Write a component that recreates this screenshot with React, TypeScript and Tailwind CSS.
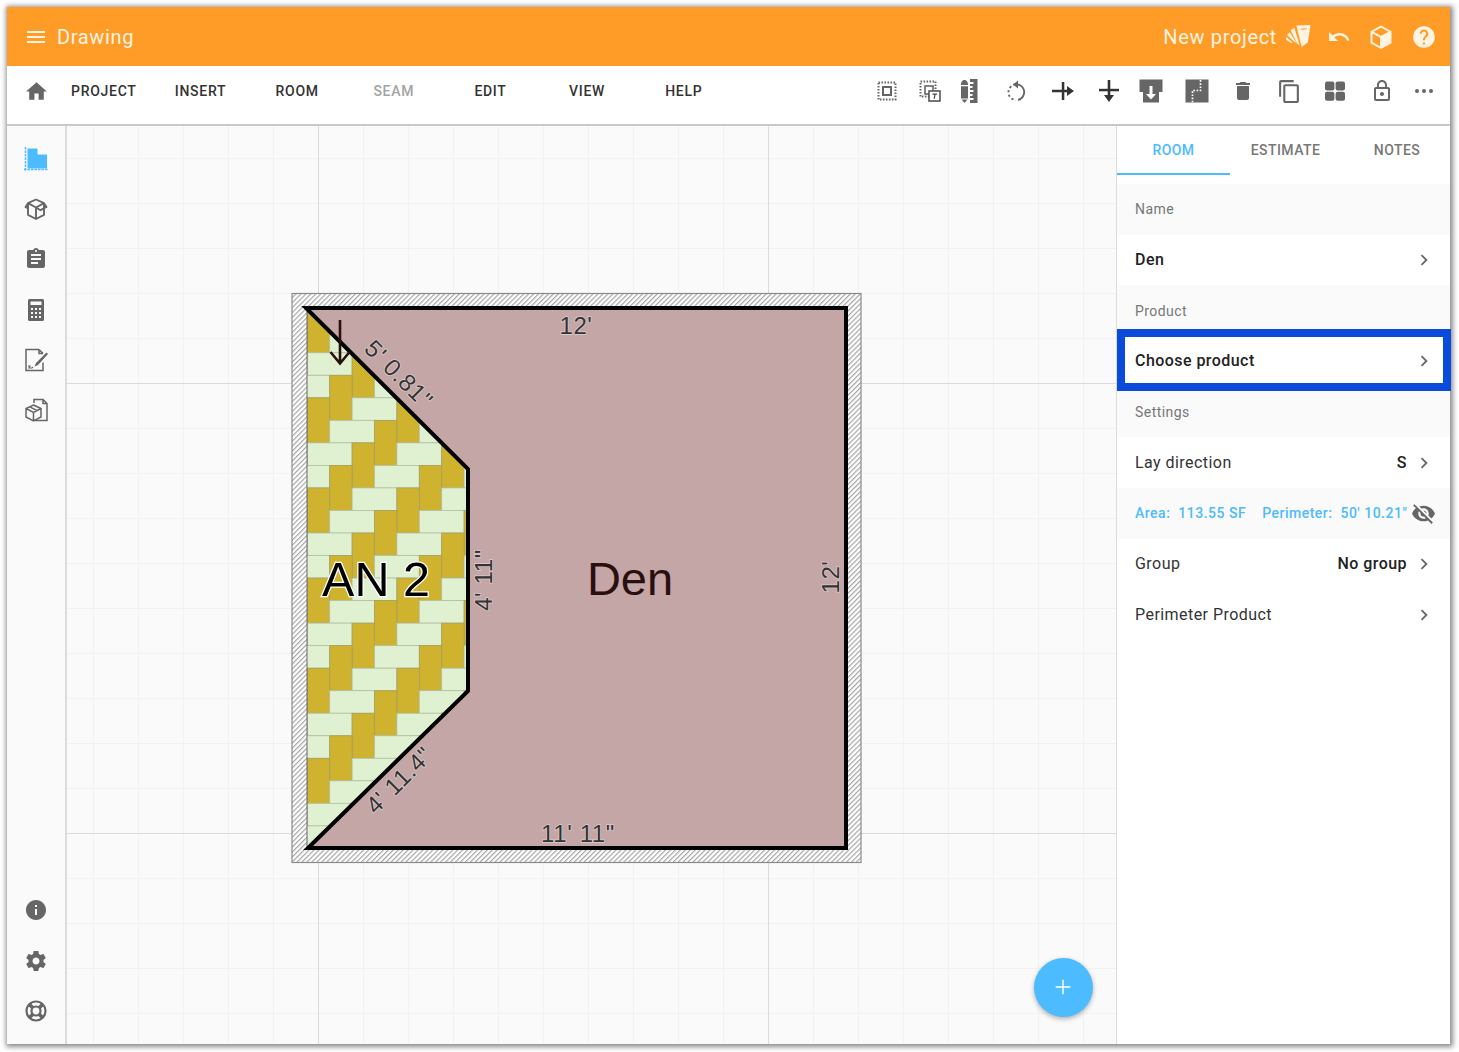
import type { ReactNode } from "react";

const font = "font-['Roboto',sans-serif]";

function Ic({ children, className = "", size = 24, fill = "#666" }: { children: ReactNode; className?: string; size?: number; fill?: string }) {
  return (
    <svg viewBox="0 0 24 24" width={size} height={size} fill={fill} className={`shrink-0 ${className}`}>
      {children}
    </svg>
  );
}

function Chevron({ className = "" }: { className?: string }) {
  return (
    <Ic size={22} className={className}>
      <path d="M10 6L8.59 7.41 13.17 12l-4.58 4.59L10 18l6-6z" />
    </Ic>
  );
}

const DOTTED = { fill: "none", stroke: "#666", strokeWidth: 2, strokeDasharray: "1.6 1.4" };

function ToolIcons() {
  return (
    <div className="ml-auto mr-[14px] flex items-center">
      <Ic>
        <rect x="3.5" y="3.5" width="17" height="17" {...DOTTED} />
        <rect x="8" y="8" width="8" height="8" fill="none" stroke="#666" strokeWidth="2" />
      </Ic>
      <Ic className="ml-[19px]">
        <rect x="2.5" y="2.5" width="15" height="15" {...DOTTED} />
        <rect x="7" y="7" width="8" height="8" fill="none" stroke="#666" strokeWidth="1.6" />
        <rect x="11" y="12" width="11" height="10" fill="#fff" stroke="#555" strokeWidth="1.6" />
        <path d="M14.5 14.5H19v1.2h-1.5l-.6 4h-1.2l.6-4h-1.8z" fill="#444" />
      </Ic>
      <Ic className="ml-[16px]">
        <path d="M3 5.5C3 3.5 4 1 6.5 1S10 3.5 10 5.5V6H3zM3 7.2h7v12.3H3zM3.5 20.5h6L6.500 24z" />
        <path d="M12 0h7.500v24H12zM12 3v2h3.500V3zm0 4v2h2.500V7zm0 4v2h3.500v-2zm0 4v2h2.500v-2zm0 4v2h3.500v-2z" fillRule="evenodd" />
      </Ic>
      <Ic className="ml-[23px]">
        <path d="M11.500 5.200a8 8 0 0 1 1.500 15.800" fill="none" stroke="#666" strokeWidth="1.9" />
        <path d="M10.300 5.300a8 8 0 0 0-6 11.500 8 8 0 0 0 6.700 4.200" fill="none" stroke="#666" strokeWidth="1.9" strokeDasharray="2.2 2.4" />
        <path d="M8 5.500L13 1.500v8z" />
      </Ic>
      <Ic className="ml-[22px]" fill="#333">
        <path d="M1 10.700h15V7l7 5-7 5v-3.700H1z" />
        <rect x="10.800" y="3" width="2.500" height="18" />
      </Ic>
      <Ic className="ml-[22px]" fill="#333">
        <path d="M10.700 1v15H7l5 7 5-7h-3.700V1z" />
        <rect x="2" y="9.800" width="20" height="2.500" />
      </Ic>
      <Ic className="ml-[18px]">
        <rect x="0.5" y="0.5" width="23" height="12.500" />
        <rect x="4" y="13" width="16" height="10.500" />
        <path d="M10.500 7h3v8h3.500L12 20.500 7 15h3.500z" fill="#fff" />
      </Ic>
      <Ic className="ml-[22px]">
        <rect x="0.5" y="0.5" width="23" height="23" />
        <path d="M15.500 1v10.500H7.500V23" stroke="#fff" strokeWidth="1.7" strokeDasharray="1.7 1.5" fill="none" />
      </Ic>
      <Ic className="ml-[22px]">
        <path d="M6 19c0 1.100.9 2 2 2h8c1.100 0 2-.9 2-2V7H6v12zM19 4h-3.500l-1-1h-5l-1 1H5v2h14V4z" />
      </Ic>
      <Ic className="ml-[22px]" size={25}>
        <path d="M16 1H4c-1.100 0-2 .9-2 2v14h2V3h12V1zm3 4H8c-1.100 0-2 .9-2 2v14c0 1.100.9 2 2 2h11c1.100 0 2-.9 2-2V7c0-1.100-.9-2-2-2zm0 16H8V7h11v14z" />
      </Ic>
      <Ic className="ml-[21px]">
        <rect x="2" y="2.500" width="9.400" height="9" rx="2" />
        <rect x="12.600" y="2.500" width="9.400" height="9" rx="2" />
        <rect x="2" y="12.700" width="9.400" height="9" rx="2" />
        <rect x="12.600" y="12.700" width="9.400" height="9" rx="2" />
      </Ic>
      <Ic className="ml-[23px]">
        <path d="M12 17c1.100 0 2-.9 2-2s-.9-2-2-2-2 .9-2 2 .9 2 2 2zm6-9h-1V6c0-2.760-2.240-5-5-5S7 3.240 7 6v2H6c-1.100 0-2 .9-2 2v10c0 1.100.9 2 2 2h12c1.100 0 2-.9 2-2V10c0-1.100-.9-2-2-2zM8.900 6c0-1.710 1.390-3.100 3.100-3.100s3.100 1.390 3.100 3.100v2H8.900V6zM18 20H6V10h12v10z" />
      </Ic>
      <Ic className="ml-[18px]">
        <circle cx="5" cy="12" r="2" />
        <circle cx="12" cy="12" r="2" />
        <circle cx="19" cy="12" r="2" />
      </Ic>
    </div>
  );
}

function SideIcons() {
  return (
    <div className="flex h-full w-[58px] shrink-0 flex-col items-center pl-[0.5px] pt-[20.5px] pb-[21px]">
      <div className="flex flex-col items-center gap-[26.4px]">
        <Ic>
          <path d="M3.500 1.500h10v6H23v14H3.500z" fill="#4dbbff" />
          <path d="M1.500 0v24M0 22.500h24" stroke="#4dbbff" strokeWidth="1.5" strokeDasharray="2.5 1" fill="none" />
        </Ic>
        <Ic>
          <path d="M12 2.500l8 3.700v11.600L12 22l-8-4.200V6.200zM4 6.200l8 4.300 8-4.300M12 10.500V22M4 6.200L1.500 10 4 11.400M20 6.200l2.500 3.800-6 3.200L12 10.500" fill="none" stroke="#666" strokeWidth="1.9" strokeLinejoin="round" />
        </Ic>
        <Ic>
          <path d="M19 3h-4.180C14.400 1.840 13.300 1 12 1c-1.300 0-2.400.84-2.820 2H5c-1.100 0-2 .9-2 2v14c0 1.100.9 2 2 2h14c1.100 0 2-.9 2-2V5c0-1.100-.9-2-2-2zm-7 0c.55 0 1 .45 1 1s-.45 1-1 1-1-.45-1-1 .45-1 1-1zm2 14H7v-2h7v2zm3-4H7v-2h10v2zm0-4H7V7h10v2z" />
        </Ic>
        <Ic>
          <path d="M5.500 1h13c.8 0 1.500.7 1.500 1.500v19c0 .8-.7 1.500-1.500 1.500h-13C4.700 23 4 22.300 4 21.500v-19C4 1.700 4.700 1 5.500 1zM6.500 3.500V7h11V3.500z" fillRule="evenodd" />
          <path d="M7 10h2v2H7zm4 0h2v2h-2zm4 0h2v2h-2zM7 14h2v2H7zm4 0h2v2h-2zm4 0h2v2h-2zM7 18h2v2H7zm4 0h2v2h-2zm4 0h2v2h-2z" fill="#fafafa" />
        </Ic>
        <Ic>
          <path d="M15 1.500H2v21h17v-8M15 1.500l4 4M15 1.500v4h4" fill="none" stroke="#666" strokeWidth="1.5" />
          <path d="M22.500 4.500L24 6 14 17l-3.500 1.500L12 15z" />
          <path d="M4 18h2l-1 2h3l1-1" fill="none" stroke="#666" strokeWidth="1.2" />
        </Ic>
        <Ic>
          <path d="M10 5V1.500h9l4 4v17H11M19 1.500v4h4" fill="none" stroke="#666" strokeWidth="1.5" />
          <path d="M9.500 7l7.500 3.500V19l-7.500 4L2 19v-8.500zM2 10.500l7.500 4 7.500-4M9.500 14.500V23M5.700 8.800l7.500 3.800" fill="#fafafa" stroke="#666" strokeWidth="1.5" />
        </Ic>
      </div>
      <div className="mt-auto flex flex-col items-center gap-[26.4px]">
        <Ic>
          <path d="M12 2C6.480 2 2 6.480 2 12s4.480 10 10 10 10-4.480 10-10S17.520 2 12 2zm1 15h-2v-6h2v6zm0-8h-2V7h2v2z" />
        </Ic>
        <Ic>
          <path d="M19.430 12.980c.04-.32.07-.64.07-.98s-.03-.66-.07-.98l2.110-1.650c.19-.15.24-.42.12-.64l-2-3.460c-.12-.22-.39-.3-.61-.22l-2.490 1c-.52-.4-1.080-.73-1.690-.98l-.38-2.650C14.460 2.180 14.250 2 14 2h-4c-.25 0-.46.18-.49.42l-.38 2.650c-.61.25-1.170.59-1.690.98l-2.490-1c-.23-.09-.49 0-.61.22l-2 3.460c-.13.22-.07.49.12.64l2.110 1.650c-.04.32-.07.65-.07.98s.03.66.07.98l-2.110 1.650c-.19.15-.24.42-.12.64l2 3.460c.12.22.39.3.61.22l2.490-1c.52.4 1.080.73 1.690.98l.38 2.650c.03.24.24.42.49.42h4c.25 0 .46-.18.49-.42l.38-2.650c.61-.25 1.170-.59 1.690-.98l2.490 1c.23.09.49 0 .61-.22l2-3.460c.12-.22.07-.49-.12-.64l-2.110-1.650zM12 15.500c-1.930 0-3.500-1.570-3.500-3.500s1.570-3.500 3.500-3.500 3.500 1.570 3.500 3.500-1.570 3.500-3.500 3.500z" />
        </Ic>
        <Ic>
          <circle cx="12" cy="12" r="9.500" fill="none" stroke="#666" strokeWidth="2.2" />
          <circle cx="12" cy="12" r="4.500" fill="none" stroke="#666" strokeWidth="2.2" />
          <path d="M5 5l4 4M19 5l-4 4M5 19l4-4M19 19l-4-4" stroke="#666" strokeWidth="3.6" />
        </Ic>
      </div>
    </div>
  );
}

const TILE_W = 22.4;
const TILE_H = 22.53;
const X0 = 307.3;
const Y0 = 307.7;

function tiles() {
  const out: ReactNode[] = [];
  for (let i = -2; i < 26; i++) {
    for (let c = -2; c < 9; c++) {
      const k = (((i + c) % 4) + 4) % 4;
      const x = X0 + c * TILE_W;
      const y = Y0 + i * TILE_H;
      if (k === 0) {
        out.push(<rect key={`g${i}-${c}`} x={x} y={y} width={TILE_W} height={TILE_H * 2} fill="#cfb32e" stroke="#a3a05e" strokeWidth="0.8" />);
      } else if (k === 2) {
        out.push(<rect key={`l${i}-${c}`} x={x} y={y} width={TILE_W * 2} height={TILE_H} fill="#e0f1d2" stroke="#b4c0a2" strokeWidth="0.8" />);
      }
    }
  }
  return out;
}

function Grid() {
  const minorX: number[] = [];
  const minorY: number[] = [];
  for (let x = 93.5; x < 1117; x += 45) minorX.push(x);
  for (let y = 158.5; y < 1044; y += 45) minorY.push(y);
  return (
    <>
      {minorX.map((x) => (
        <line key={x} x1={x} x2={x} y1="126" y2="1044" stroke="#f2f2f2" />
      ))}
      {minorY.map((y) => (
        <line key={y} y1={y} y2={y} x1="67" x2="1117" stroke="#f2f2f2" />
      ))}
      {[318.5, 768.5].map((x) => (
        <line key={x} x1={x} x2={x} y1="126" y2="1044" stroke="#dadada" />
      ))}
      {[383.5, 833.5].map((y) => (
        <line key={y} y1={y} y2={y} x1="67" x2="1117" stroke="#dadada" />
      ))}
    </>
  );
}

function Dim({ x, y, rot = 0, children }: { x: number; y: number; rot?: number; children: string }) {
  return (
    <text
      x={x}
      y={y}
      transform={rot ? `rotate(${rot} ${x} ${y})` : undefined}
      textAnchor="middle"
      dominantBaseline="central"
      fontFamily="'Liberation Sans', sans-serif"
      fontSize="24"
      letterSpacing="0.6"
      fill="#333"
      stroke="rgba(255,255,255,0.45)"
      strokeWidth="1.5"
      paintOrder="stroke"
    >
      {children}
    </text>
  );
}

function Plan() {
  const room = "306,308 846,308 846,848 308,848 468,691 468,469";
  return (
    <svg viewBox="67 126 1050 918" width="1050" height="918" className="block">
      <defs>
        <pattern id="hatch" width="3.5" height="3.5" patternUnits="userSpaceOnUse" patternTransform="rotate(45)">
          <rect width="3.5" height="3.5" fill="#fff" />
          <rect width="1.2" height="3.5" fill="#a6a6a6" />
        </pattern>
        <clipPath id="tileClip">
          <polygon points="307,308 468,469 468,691 307,848" />
        </clipPath>
      </defs>
      <rect x="67" y="126" width="1050" height="918" fill="#fafafa" />
      <Grid />
      <rect x="292" y="293.5" width="569" height="569" fill="url(#hatch)" stroke="#8a8a8a" strokeWidth="1.2" />
      <polygon points="307,308 846,308 846,848 307,848" fill="#c4a6a6" />
      <g clipPath="url(#tileClip)">{tiles()}</g>
      <line x1="307" y1="308" x2="307" y2="848" stroke="#666" strokeWidth="1" />
      <polygon points={room} fill="none" stroke="#000" strokeWidth="4" strokeLinejoin="miter" />
      <path d="M340 320v44M330.500 352l9.500 11.500 9.500-11.500" fill="none" stroke="#2a0f0f" strokeWidth="2.6" />
      <Dim x={576} y={325}>12'</Dim>
      <Dim x={578} y={833}>11' 11"</Dim>
      <Dim x={830} y={577} rot={-90}>12'</Dim>
      <Dim x={483} y={580} rot={-90}>4' 11"</Dim>
      <Dim x={399} y={374} rot={45}>5' 0.81"</Dim>
      <Dim x={399} y={780} rot={-45}>4' 11.4"</Dim>
      <text x="630" y="595" textAnchor="middle" fontFamily="'Liberation Sans', sans-serif" fontSize="47" fill="#2a0f0f">Den</text>
      <text x="376" y="596" textAnchor="middle" fontFamily="'Liberation Sans', sans-serif" fontSize="48.500" fill="#000" stroke="#fff" strokeWidth="2.5" paintOrder="stroke">AN 2</text>
    </svg>
  );
}

function Label({ children }: { children: string }) {
  return <div className="flex h-[50.7px] items-center bg-[#fafafa] px-[18px] text-sm tracking-[0.45px] text-[#777]">{children}</div>;
}

function Row({ label, value, bold }: { label: string; value?: string; bold?: boolean }) {
  return (
    <div className="flex h-[50.7px] items-center pl-[18px] pr-[15px] text-base tracking-[0.45px] text-[#333]">
      <span className={bold ? "font-medium text-[#222]" : ""}>{label}</span>
      {value && <span className="ml-auto font-medium text-[#222]">{value}</span>}
      <Chevron className={value ? "ml-[6px]" : "ml-auto"} />
    </div>
  );
}

const MENU = ["PROJECT", "INSERT", "ROOM", "SEAM", "EDIT", "VIEW", "HELP"];

export default function App() {
  return (
    <div className={`h-[1052px] w-[1459px] overflow-hidden bg-white pl-[7px] pt-[7px] ${font}`}>
      <div className="flex h-[1037px] w-[1443px] flex-col bg-white shadow-[1px_1px_5px_2px_rgba(0,0,0,0.45)]">
        <header className="flex h-[59px] shrink-0 items-center bg-[#ff9c27] pl-[17px] pr-[13px] text-xl tracking-[0.65px] text-[#fff3e2]">
          <Ic fill="#fff3e2">
            <path d="M3 18h18v-2H3v2zm0-5h18v-2H3v2zm0-7v2h18V6H3z" />
          </Ic>
          <span className="ml-[9px]">Drawing</span>
          <span className="ml-auto">New project</span>
          <Ic fill="#fff3e2" className="ml-[9px]" size={25}>
            <path d="M10 1.500l13.500-.5-2.500 16.500-6 4.500z" />
            <path d="M8 3.500l5 16.500-2-.5L4.500 6zM3.500 8l6.500 10-2-1L1 10.500zM.5 12.500L6.500 18l-1.500.3L0 15z" />
            <path d="M14 5l6-.5" stroke="#ff9c27" strokeWidth="1" fill="none" />
          </Ic>
          <Ic fill="#fff3e2" className="ml-[16px]">
            <path d="M12.500 8c-2.650 0-5.050.99-6.900 2.600L2 7v9h9l-3.620-3.620c1.390-1.160 3.160-1.880 5.120-1.880 3.540 0 6.550 2.310 7.600 5.500l2.370-.78C21.080 11.030 17.150 8 12.500 8z" />
          </Ic>
          <Ic className="ml-[18px]" fill="none">
            <path d="M12 12l9.500-5.500v11L12 23z" fill="#fff3e2" />
            <path d="M12 1.500l9.500 5.300v10.900L12 23l-9.500-5.300V6.800zM2.500 6.800L12 12l9.500-5.200M12 12v11" stroke="#fff3e2" strokeWidth="2" strokeLinejoin="round" />
          </Ic>
          <Ic fill="#fff3e2" className="ml-[18px]" size={26}>
            <path d="M12 2C6.480 2 2 6.480 2 12s4.480 10 10 10 10-4.480 10-10S17.520 2 12 2zm1 17h-2v-2h2v2zm2.070-7.750l-.9.92C13.450 12.900 13 13.500 13 15h-2v-.5c0-1.100.45-2.100 1.170-2.830l1.240-1.260c.37-.36.59-.86.59-1.410 0-1.100-.9-2-2-2s-2 .9-2 2H8c0-2.210 1.790-4 4-4s4 1.790 4 4c0 .88-.36 1.680-.93 2.250z" />
          </Ic>
        </header>

        <div className="flex h-[60px] shrink-0 items-center border-b-2 border-[#c8c8c8] bg-white pb-[8px] pl-[17px]">
          <Ic size={25}>
            <path d="M10 20v-6h4v6h5v-8h3L12 3 2 12h3v8z" />
          </Ic>
          <nav className="ml-[6.5px] flex">
            {MENU.map((m) => (
              <span key={m} className={`w-[96.67px] text-center text-sm font-medium tracking-[0.7px] ${m === "SEAM" ? "text-[#a3a3a3]" : "text-[#333]"}`}>
                {m}
              </span>
            ))}
          </nav>
          <ToolIcons />
        </div>

        <div className="flex min-h-0 flex-1">
          <aside className="flex w-[60px] shrink-0 border-r-2 border-[#dcdcdc] bg-[#fafafa]">
            <SideIcons />
          </aside>
          <main className="relative w-[1049px] shrink-0 overflow-hidden">
            <Plan />
            <button className="absolute left-[966.5px] top-[831.5px] flex h-[59px] w-[59px] items-center justify-center rounded-full bg-[#4dbbff] shadow-[0_2px_5px_rgba(0,0,0,0.3)]">
              <Ic fill="#fff" size={22}>
                <path d="M11.200 4h1.600v7.200H20v1.600h-7.200V20h-1.600v-7.200H4v-1.600h7.200z" />
              </Ic>
            </button>
          </main>
          <section className="w-[334px] shrink-0 border-l border-[#dcdcdc] bg-white">
            <div className="flex h-[49px] text-sm font-medium tracking-[0.45px]">
              <div className="flex w-[113px] items-center justify-center border-b-2 border-[#4dbbff] text-[#4dbbff]">ROOM</div>
              <div className="flex w-[111px] items-center justify-center border-b-2 border-transparent text-[#777]">ESTIMATE</div>
              <div className="flex w-[109px] items-center justify-center border-b-2 border-transparent pl-[3px] text-[#777]">NOTES</div>
            </div>
            <div className="mt-[9px]">
              <Label>Name</Label>
              <Row label="Den" bold />
              <Label>Product</Label>
              <div className="relative">
                <Row label="Choose product" bold />
                <div className="absolute left-0 -right-[1px] -top-[7px] -bottom-[4px] border-[8px] border-[#0a4bdc]" />
              </div>
              <Label>Settings</Label>
              <Row label="Lay direction" value="S" />
              <div className="flex h-[50.7px] items-center bg-[#fafafa] pl-[18px] pr-[14px] text-sm font-medium tracking-[0.5px] text-[#4dbbff]">
                <span className="whitespace-pre">Area:  113.55 SF</span>
                <span className="ml-[16px] whitespace-pre">Perimeter:  50' 10.21"</span>
                <Ic className="ml-auto" size={25}>
                  <path d="M12 7c2.760 0 5 2.240 5 5 0 .65-.13 1.260-.36 1.830l2.920 2.920c1.510-1.260 2.700-2.890 3.430-4.750-1.730-4.390-6-7.500-11-7.500-1.400 0-2.740.25-3.980.7l2.160 2.160C10.740 7.130 11.350 7 12 7zM2 4.270l2.280 2.280.46.46C3.080 8.300 1.780 10.020 1 12c1.730 4.390 6 7.500 11 7.500 1.550 0 3.030-.3 4.380-.84l.42.42L19.730 22 21 20.730 3.270 3 2 4.270zM7.530 9.800l1.550 1.550c-.05.21-.08.43-.08.65 0 1.660 1.340 3 3 3 .22 0 .44-.03.65-.08l1.550 1.550c-.67.33-1.410.53-2.200.53-2.760 0-5-2.240-5-5 0-.79.2-1.530.53-2.200zm4.310-.78l3.150 3.150.02-.16c0-1.660-1.340-3-3-3l-.17.01z" />
                </Ic>
              </div>
              <Row label="Group" value="No group" />
              <Row label="Perimeter Product" />
            </div>
          </section>
        </div>
      </div>
    </div>
  );
}
